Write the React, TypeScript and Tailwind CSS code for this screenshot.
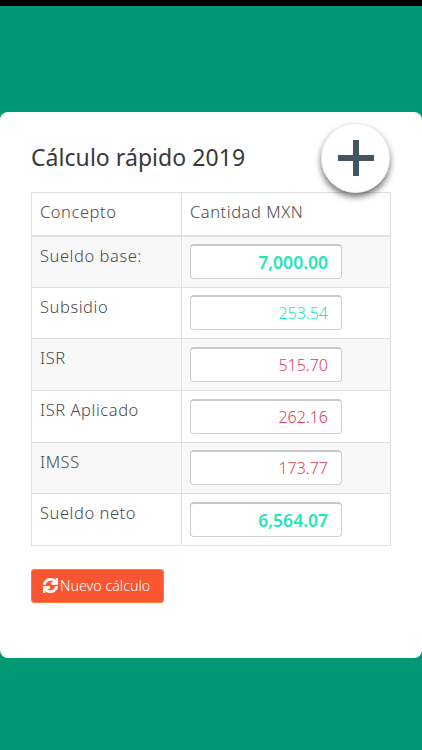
import { FaSync } from "react-icons/fa";

type Row = { label: string; value: string; color: string; bold?: boolean; striped: boolean };

const rows: Row[] = [
  { label: "Sueldo base:", value: "7,000.00", color: "text-[#1de9b6]", bold: true, striped: true },
  { label: "Subsidio", value: "253.54", color: "text-[#1de9b6]", striped: false },
  { label: "ISR", value: "515.70", color: "text-[#e0405f]", striped: true },
  { label: "ISR Aplicado", value: "262.16", color: "text-[#e0405f]", striped: false },
  { label: "IMSS", value: "173.77", color: "text-[#e0405f]", striped: true },
  { label: "Sueldo neto", value: "6,564.07", color: "text-[#1de9b6]", bold: true, striped: false },
];

export default function App() {
  return (
    <div className="w-[422px] h-[750px] overflow-hidden bg-[#009875] flex flex-col font-['Noto_Sans',sans-serif]">
      <div className="h-[6px] bg-black shrink-0" />
      <div className="relative mt-[106px] h-[546px] bg-white rounded-[8px] px-[31px] pt-[30px]">
        <h1 className="h-[50px] text-[23px] leading-[30px] font-normal text-[#37393b] tracking-[0.05px]">Cálculo rápido 2019</h1>
        <button className="absolute left-[321px] top-[11px] w-[69px] h-[70px] rounded-full bg-white border border-[#eeeeee] shadow-[0_4px_6px_rgba(0,0,0,0.55)] flex items-center justify-center">
          <svg width="38" height="38" viewBox="0 0 38 38" className="text-[#435561]" fill="currentColor">
            <rect x="16" y="1" width="6" height="36" />
            <rect x="1" y="16" width="36" height="6" />
          </svg>
        </button>
        <table className="w-[359px] table-fixed border-collapse text-[16.5px] font-light text-[#4a4a4a] tracking-[0.55px]">
          <colgroup>
            <col className="w-[150px]" />
            <col className="w-[209px]" />
          </colgroup>
          <thead>
            <tr className="h-[43px]">
              <th className="border border-[#e0e0e0] border-b-2 px-[8px] pb-[2px] font-light text-left">Concepto</th>
              <th className="border border-[#e0e0e0] border-b-2 px-[8px] pb-[2px] font-light text-left">Cantidad MXN</th>
            </tr>
          </thead>
          <tbody>
            {rows.map((r) => (
              <tr key={r.label} className={r.striped ? "h-[51.67px] bg-[#f8f8f8]" : "h-[51.67px] bg-white"}>
                <td className="border border-[#e0e0e0] px-[8px] pt-[6px] pb-0 align-top leading-[26px]">{r.label}</td>
                <td className="border border-[#e0e0e0] px-[8px] py-0 align-middle">
                  <div
                    className={`w-[152px] h-[35px] rounded-[4px] border border-[#cfcfcf] border-t-2 border-t-[#c8c8c8] bg-white flex items-center justify-end pr-[13px] tracking-normal ${r.color} ${r.bold ? "font-semibold text-[17.5px]" : "font-light text-[16px]"}`}
                  >
                    {r.value}
                  </div>
                </td>
              </tr>
            ))}
          </tbody>
        </table>
        <button className="mt-[23px] w-[133px] h-[34px] rounded-[3px] bg-[#fb5531] border border-[#f9803c] text-white text-[14.3px] flex items-center pl-[11px] gap-[2px] font-light">
          <FaSync className="w-[15px] h-[15px] shrink-0" stroke="currentColor" strokeWidth={28} />
          <span>Nuevo cálculo</span>
        </button>
      </div>
    </div>
  );
}
